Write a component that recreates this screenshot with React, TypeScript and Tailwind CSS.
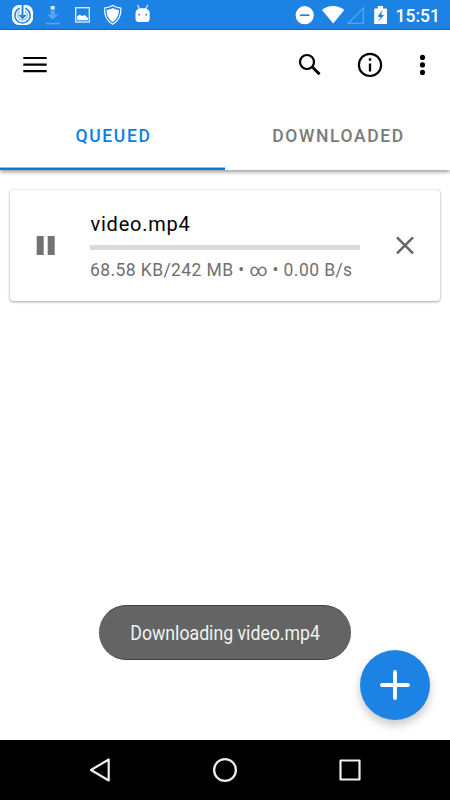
import React from "react";

function StatusBar() {
  return (
    <div className="flex h-[30px] shrink-0 items-start justify-between border-b border-[#0a6fd8] bg-[#1c83e4] text-white">
      <svg width="160" height="29" viewBox="0 0 160 29" fill="none">
        <rect x="12" y="5" width="21" height="20" rx="7" fill="#fff" />
        <path d="M19.8 8.200a7.600 7.600 0 1 0 5.400 0" stroke="#1c83e4" strokeWidth="1.500" />
        <path d="M20 11.200a4.800 4.800 0 1 0 5 0" stroke="#1c83e4" strokeWidth=".8" />
        <path d="M22.500 5v12.500M19.500 14.800l3 3.200 3-3.200" stroke="#1c83e4" strokeWidth="1.900" />
        <path d="M50.700 6h4v3.500h-4z" fill="#e4f1fd" />
        <path d="M50.700 10.500h4v4h3.600l-5.600 5.300-5.600-5.300h3.600zM46 22.800h14v1.500H46z" fill="#56a6ef" />
        <rect x="75.700" y="7.700" width="13.600" height="14.300" stroke="#d3e8fb" strokeWidth="1.400" />
        <path d="M77.200 20.300v-4l2.500-1.500 2.500 1.200 2.500-1 3.200 3v2.300z" fill="#fff" />
        <path d="M112.700 5.500c2.700 1.500 5.200 2.400 8.200 2.600.2 7-2 13-8.200 16.200-6.200-3.200-8.400-9.200-8.200-16.200 3-.2 5.500-1.100 8.200-2.600z" stroke="#fff" strokeWidth="1.200" />
        <path d="M112.700 8c2 1.100 4 1.800 6.200 2-.1 5-1.700 9.300-6.200 12-4.500-2.700-6.100-7-6.200-12 2.200-.2 4.200-.9 6.200-2z" fill="#fff" />
        <path d="M137.500 5l2.300 4.200M147.800 5l-2.300 4.200" stroke="#d9ebfc" strokeWidth="1.200" />
        <path d="M135.500 13.500c0-3 2.500-5.200 5.500-5.200h3.200c3 0 5.500 2.200 5.500 5.200v5.200c0 2-1.200 3.300-3.200 3.300h-7.800c-2 0-3.200-1.300-3.200-3.300z" fill="#fff" />
        <circle cx="139.200" cy="14.700" r=".9" fill="#1c83e4" />
        <circle cx="146.200" cy="14.700" r=".9" fill="#1c83e4" />
      </svg>
      <div className="flex h-[29px]">
        <svg width="105" height="29" viewBox="290 0 105 29" fill="none">
          <circle cx="304.700" cy="15.200" r="9.100" fill="#fff" />
          <path d="M300 15.200h9.400" stroke="#1c83e4" strokeWidth="1.700" />
          <path d="M322 10.100c6.300-5.400 15.800-5.400 22.300 0L333.200 23.600z" fill="#fff" />
          <path d="M348.300 23.300L363.400 8v15.300z" stroke="#56a6ef" strokeWidth="1.300" />
          <path d="M375 8.500h2.800V6h5.200v2.500h3.200q.8 0 .8.800v14q0 .7-.8.700h-11.200q-.8 0-.8-.7v-14q0-.8.800-.8z" fill="#fff" />
          <path d="M382.700 9.800l-5.200 6.800 3 .7-2.500 4.500 6-6.600-3-.7z" fill="#1c83e4" />
        </svg>
        <span className="w-[55px] pt-[4px] pl-[0.500px] text-[17.500px] font-medium leading-[24px]">15:51</span>
      </div>
    </div>
  );
}

function Toolbar() {
  return (
    <div className="flex h-[70px] items-center justify-between text-black">
      <svg width="70" height="70" viewBox="0 0 70 70" stroke="currentColor" strokeWidth="2.200">
        <path d="M23.300 28h23.400M23.300 34.600h23.400M23.300 41.200h23.400" />
      </svg>
      <svg width="170" height="70" viewBox="280 30 170 70" fill="none" stroke="currentColor" strokeWidth="2.200">
        <circle cx="307" cy="62" r="7" />
        <path d="M312.300 67l7.300 7.300" strokeWidth="2.800" />
        <circle cx="370" cy="64.900" r="11.100" />
        <path d="M370 63.500v8" strokeWidth="2.300" />
        <path d="M370 58.300v2.500" strokeWidth="2.400" />
        <g fill="currentColor" stroke="none">
          <circle cx="422.500" cy="57.400" r="2.550" />
          <circle cx="422.500" cy="64.900" r="2.550" />
          <circle cx="422.500" cy="72.400" r="2.550" />
        </g>
      </svg>
    </div>
  );
}

function Tabs() {
  return (
    <div className="grid h-[70px] grid-cols-2 grid-rows-[70px] text-center text-[17.500px] font-medium">
      <div className="border-b-2 border-[#0879df] pt-[13px] pl-[2px] leading-[46px] text-[#0f7fe3] shadow-[inset_0_-1px_0_#8fc1ef]">
        <span className="inline-block tracking-[1.620px]">QUEUED</span>
      </div>
      <div className="pt-[13px] pl-[2px] leading-[46px] text-[#7a7a7a]">
        <span className="inline-block tracking-[1.620px]">DOWNLOADED</span>
      </div>
    </div>
  );
}

function DownloadCard() {
  return (
    <div className="mx-[10px] mt-[20px] flex h-[111px] rounded-[3px] bg-white shadow-[0_1px_3px_rgba(0,0,0,0.320),0_0_1px_rgba(0,0,0,0.300)]">
      <svg width="80" height="111" viewBox="10 190 80 111" fill="#737373">
        <path d="M36.700 236h7v19h-7zM47.700 236h7v19h-7z" />
      </svg>
      <div className="w-[270px] pt-[21px]">
        <div className="h-[34px] pl-[0.500px] text-[20px] leading-[26px] tracking-[0.780px] text-black">video.mp4</div>
        <div className="h-[5px] bg-[#dadada]" />
        <div className="mt-[8px] whitespace-nowrap text-[17.500px] leading-[24px] tracking-[0.410px] text-[#707070]">
          68.58 KB/242 MB • ∞ • 0.00 B/s
        </div>
      </div>
      <svg width="80" height="111" viewBox="360 190 80 111" stroke="#666" strokeWidth="2.500">
        <path d="M397 237.300l16 16M413 237.300l-16 16" />
      </svg>
    </div>
  );
}

function NavigationBar() {
  return (
    <div className="grid h-[60px] shrink-0 grid-cols-[37px_125px_126px_125px_37px] bg-black">
      <span />
      <svg width="125" height="60" viewBox="37 740 125 60" fill="none" stroke="#eee" strokeWidth="2.200" strokeLinejoin="round">
        <path d="M91 770l17.700-10.500v21z" />
      </svg>
      <svg width="126" height="60" viewBox="162 740 126 60" fill="none" stroke="#eee" strokeWidth="2.300">
        <circle cx="225" cy="770" r="10.900" />
      </svg>
      <svg width="125" height="60" viewBox="288 740 125 60" fill="none" stroke="#eee" strokeWidth="2.200" strokeLinejoin="round">
        <rect x="340.500" y="760.500" width="19" height="19" />
      </svg>
    </div>
  );
}

export default function App() {
  return (
    <div className="relative flex h-[800px] w-[450px] flex-col overflow-hidden bg-white font-['Roboto',sans-serif]">
      <StatusBar />
      <header className="h-[140px] shrink-0 bg-white shadow-[0_2px_4px_rgba(0,0,0,0.400)]">
        <Toolbar />
        <Tabs />
      </header>
      <main className="flex-1">
        <DownloadCard />
      </main>
      <NavigationBar />
      <div className="absolute left-[99px] top-[605px] flex h-[55px] w-[252px] items-center justify-center rounded-full border-y border-[#404040] bg-[#646464]">
        <span className="origin-center scale-x-[0.885] whitespace-nowrap text-[20px] text-[#f2f2f2]">Downloading video.mp4</span>
      </div>
      <button className="absolute left-[360px] top-[650px] h-[70px] w-[70px] rounded-full bg-[#1c83e4] shadow-[0_5px_10px_rgba(0,0,0,0.220)]">
        <svg width="70" height="70" viewBox="0 0 70 70" stroke="#fff" strokeWidth="3.800" strokeLinecap="round">
          <path d="M35 22v26M22 35h26" />
        </svg>
      </button>
    </div>
  );
}
